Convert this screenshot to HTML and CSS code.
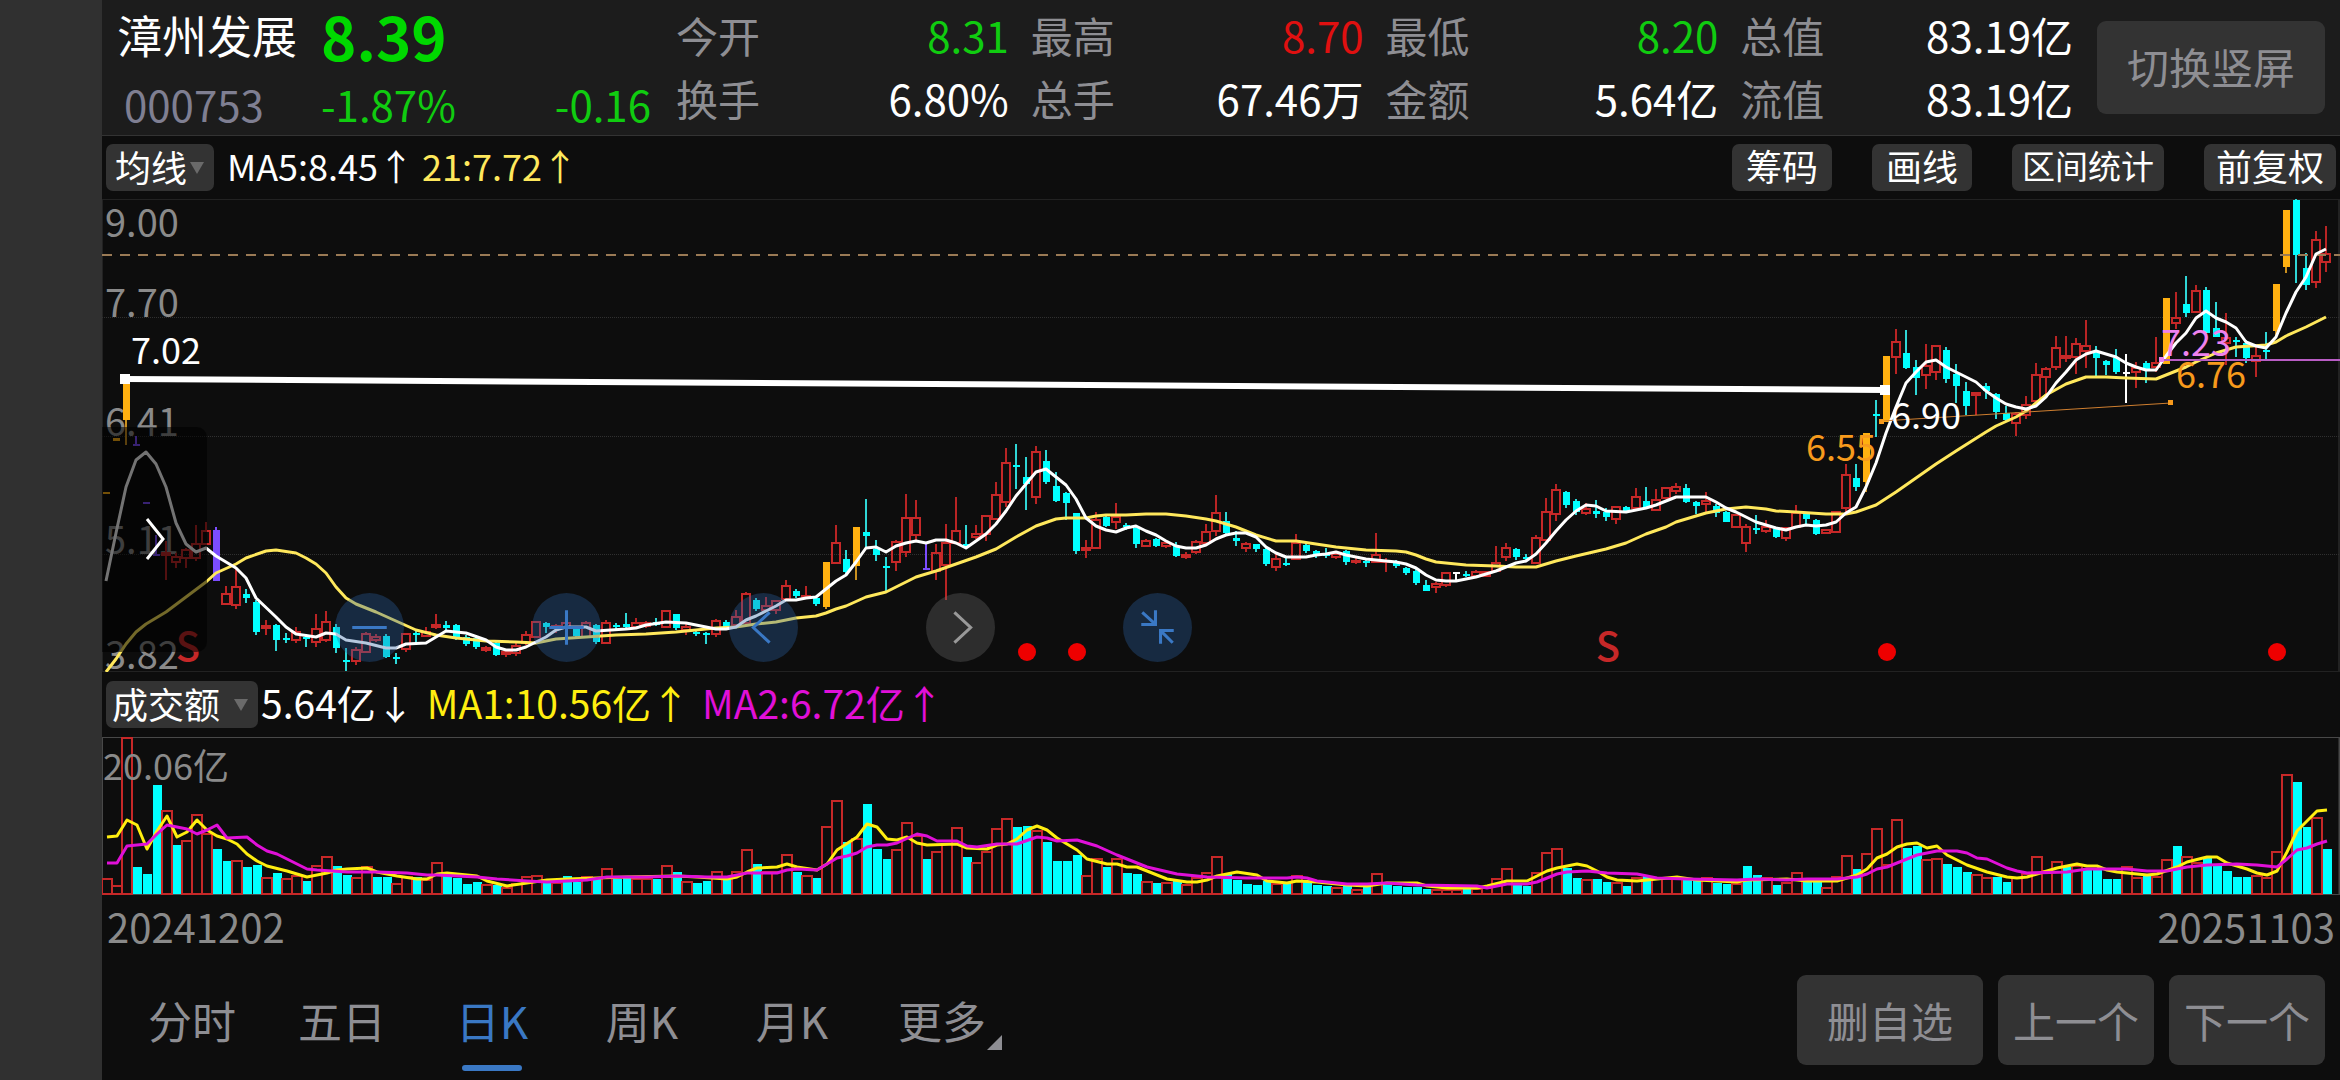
FILE: index.html
```html
<!DOCTYPE html>
<html lang="zh-CN">
<head>
  <meta charset="utf-8">
  <meta name="viewport" content="width=device-width, initial-scale=1">
  <title>漳州发展 000753</title>
  <link rel="stylesheet" href="styles.css">
</head>
<body>
  <main class="screen">
    <header class="header">
      <div class="quote">
        <h1 class="name">漳州发展</h1>
        <div class="price down">8.39</div>
        <div class="code">000753</div>
        <div class="change down"><span>-1.87%</span><span>-0.16</span></div>
      </div>
      <dl class="stats">
        <div class="stat"><dt>今开</dt><dd class="down">8.31</dd></div>
        <div class="stat"><dt>最高</dt><dd class="up">8.70</dd></div>
        <div class="stat"><dt>最低</dt><dd class="down">8.20</dd></div>
        <div class="stat"><dt>总值</dt><dd>83.19亿</dd></div>
        <div class="stat"><dt>换手</dt><dd>6.80%</dd></div>
        <div class="stat"><dt>总手</dt><dd>67.46万</dd></div>
        <div class="stat"><dt>金额</dt><dd>5.64亿</dd></div>
        <div class="stat"><dt>流值</dt><dd>83.19亿</dd></div>
      </dl>
      <button class="button rotate">切换竖屏</button>
    </header>

    <section class="bar">
      <div class="picker">
        <select aria-label="主图指标"><option>均线</option></select>
      </div>
      <div class="legend">
        <span>MA5:8.45↑</span>
        <span class="ma21">21:7.72↑</span>
      </div>
      <div class="tools">
        <button class="chip">筹码</button>
        <button class="chip">画线</button>
        <button class="chip long">区间统计</button>
        <button class="chip wide">前复权</button>
      </div>
    </section>

    <section class="chart">
      <svg id="kline" class="plot"></svg>
      <button class="drawer" aria-label="展开">
        <svg width="20" height="44" viewBox="0 0 20 44"><path d="M2 2 18 22 2 42"/></svg>
      </button>
      <div class="controls">
        <button class="round" aria-label="缩小"><svg viewBox="-34 -34 68 68"><path d="M-17 0H17"/></svg></button>
        <button class="round" aria-label="放大"><svg viewBox="-34 -34 68 68"><path d="M-17 0H17M0-17V17"/></svg></button>
        <button class="round" aria-label="左移"><svg viewBox="-34 -34 68 68"><path d="M6-15-10 0 6 15"/></svg></button>
        <button class="round off" aria-label="右移"><svg viewBox="-34 -34 68 68"><path d="M-6-15 10 0-6 15"/></svg></button>
        <button class="round" aria-label="收起"><svg viewBox="-34 -34 68 68"><path d="M-2-17V-3H-16M-3-4-15-15M16 3H3V16M4 4 15 15"/></svg></button>
      </div>
    </section>

    <section class="bar volume-bar">
      <div class="picker">
        <select aria-label="副图指标"><option>成交额</option></select>
      </div>
      <div class="legend">
        <span>5.64亿↓</span>
        <span class="ma1">MA1:10.56亿↑</span>
        <span class="ma2">MA2:6.72亿↑</span>
      </div>
    </section>

    <section class="volume">
      <svg id="volume" class="plot"></svg>
    </section>

    <div class="dates"><span>20241202</span><span>20251103</span></div>

    <footer class="footer">
      <nav class="tabs">
        <button class="tab">分时</button>
        <button class="tab">五日</button>
        <button class="tab active">日K</button>
        <button class="tab">周K</button>
        <button class="tab">月K</button>
        <button class="tab more">更多</button>
      </nav>
      <div class="actions">
        <button class="button">删自选</button>
        <button class="button step">上一个</button>
        <button class="button step">下一个</button>
      </div>
    </footer>
  </main>
  <script src="chart.js"></script>
</body>
</html>
```

FILE: styles.css
```css
* {
  margin: 0;
  padding: 0;
  box-sizing: border-box;
}

body {
  background: #303030;
  color: #fff;
  font-family: "Noto Sans CJK SC", sans-serif;
  font-size: 42px;
}

button,
select {
  font: inherit;
  color: inherit;
  border: none;
  background: none;
  cursor: pointer;
}

.screen {
  display: flex;
  flex-direction: column;
  min-height: 100vh;
  margin-left: 102px;
  background: #0d0d0d;
}

.up {
  color: #e01010;
}

.down {
  color: #10cc10;
}

/* Quote header */
.header {
  display: flex;
  height: 136px;
  background: #1c1c1c;
  border-bottom: 1px solid #333;
}

.quote {
  display: grid;
  grid-template-columns: 204px 330px;
  grid-template-rows: 69px 66px;
  width: 574px;
  padding-left: 15px;
  line-height: 69px;
  white-space: nowrap;
}

.name {
  font-size: 45px;
  font-weight: 500;
}

.price {
  font-size: 60px;
  font-weight: bold;
  color: #00d800;
}

.name {
  font-weight: normal;
}

.code {
  padding-left: 7px;
  color: #7f7f92;
}

.change {
  display: flex;
  justify-content: space-between;
}

.stats {
  flex: 1;
  display: grid;
  grid-template-columns: repeat(4, 1fr);
  grid-auto-rows: 63px;
  column-gap: 22px;
  padding-top: 3px;
  line-height: 63px;
  white-space: nowrap;
}

.stat {
  display: flex;
  justify-content: space-between;
}

.stat dt {
  color: #8e8e93;
}

.button {
  height: 90px;
  padding: 0 30px;
  border-radius: 9px;
  background: #333;
  color: #8e8e93;
  line-height: 84px;
  white-space: nowrap;
}

.button.rotate {
  width: 228px;
  height: 93px;
  margin: 21px 15px 0 24px;
  padding-bottom: 3px;
}

/* Indicator bars */
.bar {
  display: flex;
  align-items: center;
  height: 63px;
  font-size: 36px;
}

.picker {
  position: relative;
  margin-left: 4px;
}

.picker select {
  display: block;
  appearance: none;
  width: 108px;
  height: 47px;
  padding: 0 0 3px 9px;
  border-radius: 7px;
  background: #333;
  line-height: 44px;
}

.picker::after {
  content: "";
  position: absolute;
  right: 10px;
  top: 18px;
  border: 7px solid transparent;
  border-top: 12px solid #6a6a6a;
  border-bottom: none;
  pointer-events: none;
}

.legend {
  display: flex;
  gap: 8px;
  margin-left: 13px;
  padding-bottom: 6px;
  white-space: nowrap;
}

.ma21 {
  color: #ffe85c;
}

.tools {
  display: flex;
  gap: 40px;
  margin-left: auto;
  padding-right: 4px;
}

.chip {
  height: 47px;
  padding: 0 14px 4px;
  border-radius: 7px;
  background: #333;
  font-size: 36px;
  line-height: 43px;
}

.chip.wide {
  padding: 0 12px 4px;
}

.chip.long {
  padding: 0 10px 4px;
  font-size: 33px;
}

.volume-bar {
  height: 65px;
}

.volume-bar .picker select {
  width: 152px;
  padding-left: 6px;
}

.volume-bar .legend {
  gap: 12px;
  margin-left: 3px;
  font-size: 39px;
}

.ma1 {
  color: #ffee10;
}

.ma2 {
  color: #e010d8;
}

/* Charts */
.chart,
.volume {
  position: relative;
  flex: 473 0 0;
  min-height: 0;
  overflow: hidden;
}

.volume {
  flex-grow: 158;
}

.plot {
  position: absolute;
  width: 100%;
  height: 100%;
}

.frame {
  fill: none;
  stroke: #222;
  stroke-width: 2;
}

.volume .frame {
  stroke: #484848;
}

.grid {
  stroke: #303030;
  stroke-dasharray: 1 1;
}

.last {
  stroke: #9a7a55;
  stroke-width: 2;
  stroke-dasharray: 10 8;
}

.axis {
  fill: #8a8a8a;
  font-size: 38px;
}

.volume .axis {
  font-size: 36px;
}

.note {
  font-size: 36px;
}

.sell {
  fill: #c62828;
  font-size: 40px;
  font-weight: 500;
  text-anchor: middle;
}

.dot {
  fill: #ee0000;
}

.line {
  fill: none;
  stroke-width: 3;
  stroke-linejoin: round;
}

.drawer {
  position: absolute;
  left: 0;
  top: 228px;
  width: 105px;
  height: 225px;
  padding-top: 6px;
  border-radius: 0 10px 10px 0;
  background: rgba(0, 0, 0, 0.55);
}

.drawer path,
.round path {
  fill: none;
  stroke: #fff;
  stroke-width: 3;
}

.controls {
  position: absolute;
  left: 233px;
  bottom: 10px;
  display: flex;
  gap: 128px;
}

.round {
  width: 69px;
  height: 69px;
  border-radius: 50%;
  background: rgba(44, 96, 164, 0.35);
}

.round svg {
  display: block;
}

.round path {
  stroke: #3a78c4;
}

.round.off {
  background: rgba(105, 105, 105, 0.35);
}

.round.off path {
  stroke: #999;
}

.dates {
  display: flex;
  justify-content: space-between;
  height: 65px;
  padding: 0 5px;
  color: #8a8a8a;
  font-size: 40px;
  line-height: 62px;
}

/* Footer */
.footer {
  display: flex;
  align-items: center;
  justify-content: space-between;
  height: 120px;
  padding: 0 15px;
}

.tabs {
  display: flex;
}

.tab {
  position: relative;
  width: 150px;
  height: 120px;
  color: #8e8e93;
  font-size: 44px;
  line-height: 116px;
}

.tab.active {
  color: #3a78c4;
}

.tab.active::after {
  content: "";
  position: absolute;
  left: 45px;
  bottom: 9px;
  width: 60px;
  height: 6px;
  border-radius: 3px;
  background: #3a78c4;
}

.tab.more::after {
  content: "";
  position: absolute;
  right: 15px;
  bottom: 30px;
  border-left: 15px solid transparent;
  border-bottom: 15px solid #8e8e93;
}

.actions {
  display: flex;
  gap: 15px;
}

.button.step {
  padding: 0 15px;
}
```

FILE: chart.js
```js
// kind, high, body top, body bottom, low
// r = rise, c = fall, o = limit up, p = limit down, w = flat
const CANDLES = `
o 293 293 295 295,o 239 239 242 242,o 184 184 221 246,p 237 245 247 247,p 303 303 305 305,p 336 355 357 357,
r 342 354 356 381,r 354 358 363 369,r 349 351 359 369,r 326 345 359 362,r 323 332 345 345,p 328 331 382 382,
r 387 395 405 405,r 370 388 406 410,c 390 395 399 404,c 401 403 433 436,r 421 427 429 436,c 425 426 441 452,
c 434 439 441 444,r 428 433 441 444,c 435 438 440 448,r 415 430 443 448,r 412 423 441 443,c 425 428 449 454,
c 449 461 463 472,r 448 451 462 466,r 433 435 453 454,r 435 438 441 443,c 435 437 458 459,c 454 458 460 465,
r 434 435 450 453,c 432 434 436 443,r 428 433 437 438,r 415 426 428 430,c 422 426 429 432,c 425 426 438 441,
c 436 438 445 447,c 436 439 448 450,r 447 449 451 453,c 443 444 456 457,r 450 453 455 458,r 444 447 454 457,
r 432 436 444 446,r 423 423 438 438,c 423 424 428 434,r 425 427 429 434,r 423 424 429 435,c 427 428 437 438,
r 422 424 438 439,c 425 426 443 445,r 421 424 444 445,c 424 426 428 430,c 414 425 428 430,r 419 424 428 430,
r 422 424 427 429,c 419 423 426 427,r 412 412 428 429,c 415 415 429 431,r 425 428 431 436,c 431 433 434 437,
c 433 434 436 445,r 420 422 435 438,c 421 423 429 431,r 411 418 426 426,r 393 395 424 425,c 399 401 410 412,
r 398 407 411 412,r 401 402 411 415,r 381 387 400 400,c 390 392 397 399,r 387 397 399 400,c 398 399 405 407,
o 363 363 408 410,r 326 344 364 364,c 351 360 373 375,o 328 328 367 381,c 300 333 337 348,c 341 350 356 362,
c 358 367 369 393,r 341 343 363 372,r 295 319 353 358,r 301 319 336 341,p 344 369 371 371,r 345 354 372 381,
r 325 344 366 401,r 298 332 344 345,c 326 345 347 348,r 326 335 338 340,r 316 317 335 342,r 283 296 320 321,
r 249 264 303 308,c 245 266 268 290,c 258 278 285 311,r 247 253 298 305,c 251 262 283 285,c 273 287 302 303,
c 293 294 304 321,c 314 314 352 355,r 341 349 351 359,r 313 321 349 350,c 316 318 327 328,r 304 318 323 330,
c 324 326 328 331,c 328 329 345 349,r 340 342 347 348,c 339 340 347 348,r 342 344 347 349,c 343 347 357 358,
r 353 356 358 360,r 341 343 353 355,r 325 333 344 345,r 296 314 332 337,c 313 322 334 336,c 332 339 342 347,
r 343 345 349 353,c 345 345 350 353,c 349 350 365 367,r 353 360 368 372,c 358 364 366 367,r 335 344 360 360,
c 344 346 352 354,c 351 352 357 359,c 349 355 357 359,r 353 355 358 360,c 351 352 363 366,r 359 362 363 365,
c 359 362 364 368,r 334 356 363 363,r 359 362 363 373,c 361 363 367 369,c 368 369 374 376,c 370 372 384 386,
c 381 386 392 392,r 383 385 388 394,r 373 374 386 388,w 373 373 375 383,c 372 375 377 378,r 371 373 377 378,
r 372 373 377 378,r 347 364 372 372,r 344 349 358 362,c 349 350 358 361,c 355 358 360 361,r 336 339 364 365,
r 299 313 341 341,r 285 291 315 322,c 292 293 306 309,c 300 302 313 316,r 304 310 314 316,c 301 312 315 319,
c 309 313 318 322,r 307 308 320 325,c 307 308 312 312,r 289 298 309 309,c 288 302 308 309,r 290 301 311 312,
r 289 289 299 299,r 284 288 292 295,c 285 289 303 304,c 302 303 307 315,r 293 302 305 313,c 305 307 314 318,
c 312 313 323 323,r 315 316 328 329,r 325 328 344 353,c 316 329 331 335,r 321 328 332 334,c 329 330 338 339,
r 328 329 339 342,r 306 314 328 328,c 313 315 320 327,c 320 321 335 336,r 330 331 334 335,r 312 313 333 334,
r 265 276 309 313,c 265 279 288 292,o 234 234 283 293,c 201 215 217 238,o 157 157 223 223,r 130 143 158 175,
c 131 154 169 170,c 161 168 179 196,r 145 167 176 190,r 146 147 173 181,c 148 151 180 184,c 165 175 187 204,
c 183 192 207 216,r 193 194 196 216,c 184 187 192 200,c 194 195 213 220,c 207 214 221 223,r 213 215 224 237,
r 197 206 216 220,r 164 176 202 203,r 168 170 178 198,r 137 149 168 171,r 137 157 159 163,r 139 145 158 175,
r 121 147 152 169,c 147 153 159 177,c 161 162 166 176,c 150 159 173 175,w 155 173 175 204,r 163 169 173 189,
c 162 164 171 184,r 138 164 168 173,o 99 99 165 165,r 93 119 124 130,c 77 105 114 118,r 86 92 113 114,
c 88 91 134 134,c 103 129 138 138,r 114 139 144 166,c 138 141 143 158,c 141 144 159 164,r 148 157 162 178,
c 133 151 153 161,o 85 85 132 139,o 11 11 68 74,c 0 1 56 84,c 54 69 86 91,r 32 41 83 89,r 27 55 63 73`;

// index:y pairs
const MA5 = `0:382 1:334 2:288 3:261 4:253 5:265 6:288 7:324 8:345 9:353 10:349 11:357 13:369 14:379 15:399 17:418 18:428
19:435 21:438 22:434 23:435 24:441 26:444 28:449 29:449 30:445 32:444 33:438 34:432 36:434 38:441 39:448 40:451 41:451
42:448 43:443 44:438 45:431 46:428 48:428 49:432 52:430 53:429 54:426 56:423 58:424 59:426 60:428 61:430 62:430 63:428
64:421 65:417 66:412 67:407 68:401 69:401 70:399 71:398 72:390 73:382 74:376 75:363 76:349 77:348 78:353 79:347 80:344
81:342 82:344 83:341 84:341 85:344 86:349 87:342 88:335 89:325 90:312 91:297 92:285 93:273 94:270 95:278 96:286 97:300
98:319 99:327 100:331 101:333 102:329 103:327 104:332 105:336 106:342 107:347 108:349 109:349 110:346 111:340 112:336
113:334 114:334 115:338 116:348 117:354 118:358 120:358 121:356 122:355 123:353 124:356 125:358 126:360 127:361 129:363
130:365 131:369 132:376 133:381 134:382 135:382 136:380 137:378 138:375 139:372 140:368 141:364 142:362 143:355 144:344
145:332 146:321 147:312 148:306 149:307 150:312 152:313 154:309 155:306 156:302 157:298 160:298 161:303 162:309 163:313
164:318 165:323 166:326 167:329 168:331 169:328 170:326 171:327 172:326 173:323 174:314 175:308 176:288 177:264 178:234
179:208 180:184 181:173 182:163 183:161 184:168 185:173 186:178 187:183 188:192 189:199 190:205 191:208 192:210 193:207
194:198 195:184 196:173 197:161 198:155 199:152 200:155 201:158 202:164 203:168 204:171 205:171 206:157 207:144 208:134
209:119 210:112 211:119 212:123 213:129 214:143 215:147 216:149 217:138 218:114 219:93 220:78 221:55 222:50`;

const MA21 = `0:473 1:460 2:445 3:433 4:425 6:413 8:398 10:383 11:374 13:365 14:359 16:352 17:351 19:354 20:359 21:365 22:374
23:388 24:399 25:405 27:413 29:422 31:431 33:436 35:439 38:442 41:443 43:444 45:440 48:438 51:436 54:435 57:433 59:431
61:429 63:428 65:425 67:423 69:419 71:417 72:414 73:410 74:407 76:398 78:393 79:388 81:378 83:372 85:365 87:358 89:350
91:338 93:327 95:320 96:319 98:319 99:317 100:316 102:316 104:315 106:315 108:317 110:320 111:322 113:328 115:336
117:342 119:342 121:345 123:348 126:351 129:352 130:353 131:356 132:360 133:363 136:366 139:367 141:368 143:368 144:365
145:362 147:357 150:350 152:344 154:335 156:328 157:323 160:314 162:310 164:308 166:310 167:312 169:313 172:315 174:315
175:313 177:306 179:293 181:279 183:265 185:252 188:233 189:227 191:218 192:212 194:196 196:185 198:178 200:178 202:179
205:180 206:176 208:168 209:163 211:154 212:151 213:148 216:146 217:143 218:137 220:128 222:118`;

const VOLUMES = `r17 r10 r158 c28 c21 c110 r85 c50 r55 r81 r62 c46 c34 r35 c28 c30 r18 c22 r17 r20 c14 r30 r39 c29 c20 r18
r29 c18 c18 r12 r19 c18 r16 r33 c20 c17 c11 c13 r11 c10 r8 r12 r19 r20 c13 r13 c19 c13 r19 c17 r27 c16 c17 r17 r17 c16
r30 c23 r14 c12 c14 r24 c16 r24 r46 c31 r24 r24 r41 c23 r20 c17 r69 r95 c53 r57 c91 c46 c36 r46 r73 r60 c36 r44 r52 r68
c38 r33 r44 r67 r77 c68 c69 r65 c53 c34 c34 c40 r20 r37 c28 r37 c22 c21 r14 c12 r13 c14 r11 r18 r23 r39 c21 c15 c11 c10
c14 r12 c12 r20 c13 c10 c9 r8 c9 r6 c8 r22 c10 c9 c8 c8 c6 r6 r6 r6 c7 r7 r8 r17 r27 c10 c9 r23 r43 r47 c27 c17 r16 c16
c13 r13 c9 r18 c19 r17 r17 r17 c15 c15 r18 c12 c11 r12 c29 c20 r18 c10 r13 r23 c13 c13 r8 r19 r40 c26 r42 r67 r31 r76
c47 c49 r36 r37 c31 c28 c23 r21 r18 c18 c13 r18 r22 r39 r25 r34 c28 r30 c25 c25 c16 c16 r29 r18 c19 r19 r36 c49 r39 r33
c37 c30 c24 c18 c18 r20 r18 r44 r121 c113 c68 r78 c46`;

const VMA1 = `0:100 1:99 2:83 3:88 4:112 5:94 6:79 7:100 8:95 9:83 10:93 11:99 12:102 13:107 14:117 15:124 16:129 18:134
20:140 22:136 23:133 24:132 26:131 27:135 29:139 31:142 32:142 33:137 34:136 35:137 37:139 38:144 40:149 42:146 44:143
46:142 49:141 52:140 57:139 59:140 62:142 63:140 64:135 65:131 67:130 68:127 69:130 71:133 72:127 73:113 75:100 76:87
77:90 78:102 79:103 80:100 81:106 82:108 85:107 86:111 88:112 89:108 90:107 91:102 92:93 93:89 94:93 95:101 97:113
98:122 100:127 101:127 102:130 103:130 105:138 106:142 108:145 109:145 110:143 111:139 112:137 113:135 115:138 116:144
118:146 119:144 121:145 124:148 126:149 128:146 131:146 132:149 134:151 137:151 138:149 140:144 142:144 143:139 144:134
145:131 147:127 148:129 149:134 150:140 151:143 153:144 154:143 157:140 159:143 163:145 164:143 168:142 170:144 173:144
174:141 175:138 176:132 177:121 178:117 179:110 180:107 181:106 182:111 183:109 184:118 186:128 188:135 190:140 191:141
192:140 193:137 194:134 195:131 197:127 198:129 199:129 200:133 201:135 202:136 204:138 205:137 207:130 208:125 210:120
211:120 212:126 214:132 215:136 216:138 217:134 218:115 219:94 221:74 222:73`;

const VMA2 = `0:126 1:126 2:109 4:107 5:97 6:88 8:92 9:97 10:93 11:88 12:101 14:100 15:108 16:114 17:117 18:122 20:132
21:133 24:135 27:135 30:136 32:138 33:138 37:140 39:142 42:144 44:145 48:143 50:140 54:140 57:139 60:140 62:140 64:136
67:136 68:133 69:132 71:133 72:127 73:121 74:119 75:116 76:110 77:108 78:108 79:106 81:97 82:99 83:104 85:104 86:109
87:110 89:107 91:107 93:100 94:101 95:104 97:103 99:109 101:118 104:130 107:137 110:140 114:141 118:141 119:140 120:141
121:144 124:147 126:147 128:146 131:148 137:149 138:151 140:147 142:147 143:145 145:137 146:135 148:134 150:136 153:137
155:141 158:142 163:143 165:142 168:143 170:142 173:142 175:140 176:137 177:132 178:130 180:122 181:118 183:114 185:114
186:116 187:121 188:122 190:131 191:134 192:136 196:135 198:132 200:132 202:132 204:134 206:134 208:130 210:128 213:127
215:128 217:130 218:122 219:113 220:111 221:107 222:104`;

const COLORS = { r: '#c62828', c: '#00ffff', o: '#ffb010', p: '#7c4dff', w: '#ffffff' };
const WICKS = { r: '#b82424', c: '#2fd6d6', o: '#c98f1e', p: '#7c4dff', w: '#ffffff' };

function add(svg, tag, attrs, text) {
  const el = document.createElementNS('http://www.w3.org/2000/svg', tag);
  for (const key in attrs) el.setAttribute(key, attrs[key]);
  if (text) el.textContent = text;
  svg.appendChild(el);
}

function rect(svg, x, y, width, height, fill) {
  add(svg, 'rect', { x, y, width, height, fill });
}

function hollow(svg, x, y, width, height, stroke) {
  add(svg, 'rect', { x, y, width, height, fill: 'none', stroke, 'stroke-width': 2 });
}

function line(svg, data, x, y, stroke) {
  const points = data.split(/\s+/).map(pair => {
    const [i, v] = pair.split(':').map(Number);
    return x(i) + ',' + y(v);
  });
  add(svg, 'polyline', { class: 'line', points: points.join(' '), stroke });
}

function drawKline() {
  const svg = document.getElementById('kline');
  const W = svg.clientWidth;
  const H = svg.clientHeight;
  const step = W / 223.8;
  const x = i => (i + 0.4) * step;
  const y = v => v * H / 473;
  svg.replaceChildren();

  add(svg, 'rect', { class: 'frame', x: 0, y: 0, width: W - 1, height: H });
  [118, 237, 355].forEach(v => add(svg, 'line', { class: 'grid', x1: 0, x2: W, y1: y(v) + 0.5, y2: y(v) + 0.5 }));
  [['9.00', 38], ['7.70', 118], ['6.41', 237], ['5.11', 355], ['3.82', 470]]
    .forEach(([label, v]) => add(svg, 'text', { class: 'axis', x: 3, y: y(v) }, label));

  CANDLES.trim().split(/,\s*/).forEach((row, i) => {
    const [kind, ...v] = row.split(' ');
    const [high, top, bottom, low] = v.map(n => y(Number(n)));
    const cx = Math.round(x(i));
    rect(svg, cx - 1, high, 2, top - high, WICKS[kind]);
    rect(svg, cx - 1, bottom, 2, low - bottom, WICKS[kind]);
    if (kind === 'r') {
      hollow(svg, cx - 4, top, 8, Math.max(bottom - top, 1), COLORS.r);
    } else {
      rect(svg, cx - 3, top, 7, Math.max(bottom - top, 2), COLORS[kind]);
    }
  });

  add(svg, 'line', { class: 'last', x1: 0, x2: W, y1: y(56), y2: y(56) });
  line(svg, MA21, x, y, '#ffe85c');
  line(svg, MA5, x, y, '#ffffff');

  // hand-drawn trend lines
  add(svg, 'line', { x1: x(1.9), y1: y(180), x2: x(177.9), y2: y(191), stroke: '#fff', 'stroke-width': 6 });
  rect(svg, x(1.9) - 5, y(180) - 5, 10, 10, '#fff');
  rect(svg, x(177.9) - 5, y(191) - 5, 10, 10, '#fff');
  add(svg, 'line', { x1: x(177.6), y1: y(222), x2: x(206.5), y2: y(204), stroke: '#cf7f30' });
  rect(svg, x(177.6) - 3, y(222) - 2, 5, 5, '#f79a1c');
  rect(svg, x(206.5) - 3, y(204) - 3, 5, 5, '#f79a1c');
  add(svg, 'line', { x1: x(205.5), y1: y(161), x2: W, y2: y(161), stroke: '#b85cc4', 'stroke-width': 2 });
  rect(svg, x(205.5) - 2, y(161) - 3, 5, 5, '#ee82ee');

  [['7.02', 2.5, 165, '#fff'], ['6.90', 178.5, 230, '#fff'], ['6.55', 170, 262, '#f79a1c'],
    ['7.23', 205.5, 157, '#ee82ee'], ['6.76', 207, 189, '#f79a1c']]
    .forEach(([label, i, v, fill]) => add(svg, 'text', { class: 'note', x: x(i), y: y(v), fill }, label));

  [8, 150].forEach(i => add(svg, 'text', { class: 'sell', x: x(i) + 2, y: y(462) }, 'S'));
  [92, 97, 178, 217].forEach(i => add(svg, 'circle', { class: 'dot', cx: x(i) + 1, cy: y(453), r: 9 }));
}

function drawVolume() {
  const svg = document.getElementById('volume');
  const W = svg.clientWidth;
  const H = svg.clientHeight;
  const step = W / 223.8;
  const x = i => (i + 0.5) * step;
  const y = v => v * H / 158;
  svg.replaceChildren();

  add(svg, 'rect', { class: 'frame', x: 0, y: 0, width: W - 0.5, height: H });
  VOLUMES.split(/\s+/).forEach((item, i) => {
    const top = y(158 - Number(item.slice(1)));
    const cx = Math.round(x(i));
    if (item[0] === 'r') {
      hollow(svg, cx - 5, top + 1, 10, H - top - 2, COLORS.r);
    } else {
      rect(svg, cx - 4, top, 9, H - top - 1, COLORS.c);
    }
  });
  add(svg, 'text', { class: 'axis', x: 1, y: y(43) }, '20.06亿');
  line(svg, VMA1, x, y, '#ffee10');
  line(svg, VMA2, x, y, '#e010d8');
}

function draw() {
  drawKline();
  drawVolume();
}

draw();
window.addEventListener('resize', draw);
```
